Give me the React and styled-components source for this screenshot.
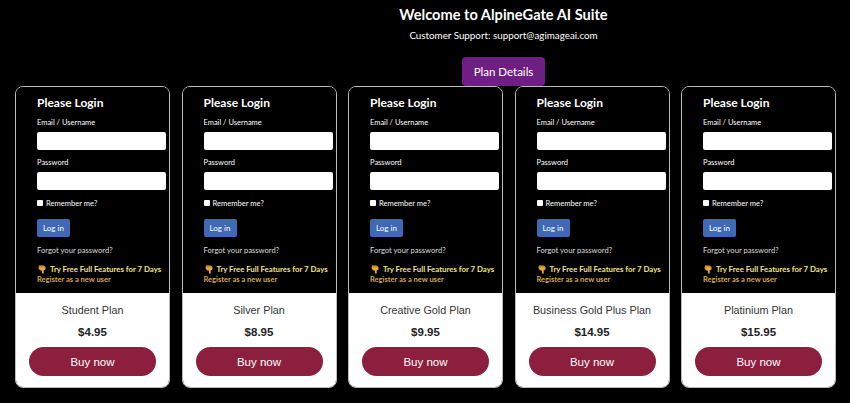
import React from "react"
import styled, { createGlobalStyle } from "styled-components"

const GlobalStyle = createGlobalStyle`
  html, body {
    margin: 0;
    background: #000;
  }
  body {
    font-family: Lato, "Open Sans", sans-serif;
    color: #fff;
  }
`

const Page = styled.div`
  width: 850px;
  height: 403px;
  overflow: hidden;
  background: #000;
`

const Header = styled.header`
  display: flex;
  flex-direction: column;
  align-items: center;
  padding-left: 157px;
`

const Title = styled.h1`
  margin: 5px 0 0;
  font-size: 14.6px;
  line-height: 20px;
  font-weight: 700;
`

const Support = styled.p`
  margin: 3px 0 0;
  font-size: 9.8px;
  line-height: 14px;
`

const DetailsButton = styled.button`
  margin-top: 15px;
  width: 83px;
  height: 29px;
  border: 0;
  border-radius: 4px;
  background: #6f1f83;
  color: #fff;
  font-family: inherit;
  font-size: 11.5px;
`

const Plans = styled.div`
  width: 821px;
  margin-left: 15px;
  display: grid;
  grid-template-columns: repeat(5, 155px);
  justify-content: space-between;
`

const Card = styled.div`
  height: 302px;
  border: 1px solid #bbb;
  border-radius: 8px;
  overflow: hidden;
  box-sizing: border-box;
  display: flex;
  flex-direction: column;
`

const Login = styled.form`
  height: 206px;
  box-sizing: border-box;
  padding: 8px 3px 0 21px;
  background: #000;
`

const LoginTitle = styled.h2`
  margin: 0;
  font-size: 12px;
  line-height: 16px;
  font-weight: 700;
`

const FieldLabel = styled.label`
  display: block;
  margin-top: 7px;
  font-size: 7.5px;
  line-height: 10px;
`

const TextInput = styled.input`
  display: block;
  width: 100%;
  height: 18px;
  margin-top: 4px;
  box-sizing: border-box;
  border: 0;
  border-radius: 2px;
  background: #fff;
  & + label {
    margin-top: 8px;
  }
`

const Remember = styled.div`
  display: flex;
  align-items: center;
  gap: 3px;
  margin-top: 8px;
  font-size: 7.6px;
  line-height: 10px;
`

const Check = styled.span`
  width: 6px;
  height: 6px;
  border-radius: 1px;
  background: #fff;
`

const LoginButton = styled.button`
  display: block;
  margin-top: 11px;
  width: 33px;
  height: 18px;
  padding: 0;
  border: 0;
  border-radius: 2px;
  background: #3f68b5;
  color: #fff;
  font-family: inherit;
  font-size: 8px;
`

const Forgot = styled.div`
  margin-top: 8px;
  font-size: 7.6px;
  line-height: 10px;
  color: #ddd;
`

const Trial = styled.div`
  display: flex;
  align-items: center;
  gap: 4px;
  margin-top: 9px;
  padding-left: 1px;
  font-size: 7.8px;
  line-height: 10px;
  font-weight: 700;
  color: #f4e38a;
  white-space: nowrap;
`

const Register = styled.div`
  margin-top: 1px;
  font-size: 7.5px;
  line-height: 10px;
  font-weight: 700;
  color: #d9a64e;
`

const Offer = styled.div`
  flex: 1;
  background: #fff;
  display: flex;
  flex-direction: column;
  align-items: center;
  font-family: "Liberation Sans", Arial, sans-serif;
`

const PlanName = styled.div`
  margin-top: 10px;
  font-size: 10.8px;
  line-height: 14px;
  color: #333;
`

const Price = styled.div`
  margin-top: 8px;
  font-size: 11.5px;
  line-height: 14px;
  font-weight: 700;
  color: #222;
`

const BuyButton = styled.button`
  margin-top: 8px;
  width: 127px;
  height: 29px;
  border: 0;
  border-radius: 15px;
  background: #8b1f3d;
  color: #fff;
  font-family: inherit;
  font-size: 11.5px;
`

const HandIcon = () => (
  <svg width="8" height="9" viewBox="0 0 8 9">
    <path d="M1 .5h4.500L7.500 2v2.500L5.700 5.500V8.500H4V5.800L1.800 5.200L.5 3z" fill="#e8a93a" />
    <path d="M1 1.800h5.500" stroke="#a36f1e" strokeWidth="0.6" />
  </svg>
)

const plans = [
  { name: "Student Plan", price: "$4.95" },
  { name: "Silver Plan", price: "$8.95" },
  { name: "Creative Gold Plan", price: "$9.95" },
  { name: "Business Gold Plus Plan", price: "$14.95" },
  { name: "Platinium Plan", price: "$15.95" },
]

const App = () => {
  return (
    <Page>
      <GlobalStyle />
      <Header>
        <Title>Welcome to AlpineGate AI Suite</Title>
        <Support>Customer Support: support@agimageai.com</Support>
        <DetailsButton>Plan Details</DetailsButton>
      </Header>
      <Plans>
        {plans.map((plan) => (
          <Card key={plan.name}>
            <Login>
              <LoginTitle>Please Login</LoginTitle>
              <FieldLabel>Email / Username</FieldLabel>
              <TextInput />
              <FieldLabel>Password</FieldLabel>
              <TextInput type="password" />
              <Remember>
                <Check />
                Remember me?
              </Remember>
              <LoginButton type="button">Log in</LoginButton>
              <Forgot>Forgot your password?</Forgot>
              <Trial>
                <HandIcon />
                Try Free Full Features for 7 Days
              </Trial>
              <Register>Register as a new user</Register>
            </Login>
            <Offer>
              <PlanName>{plan.name}</PlanName>
              <Price>{plan.price}</Price>
              <BuyButton>Buy now</BuyButton>
            </Offer>
          </Card>
        ))}
      </Plans>
    </Page>
  )
}

export default App
